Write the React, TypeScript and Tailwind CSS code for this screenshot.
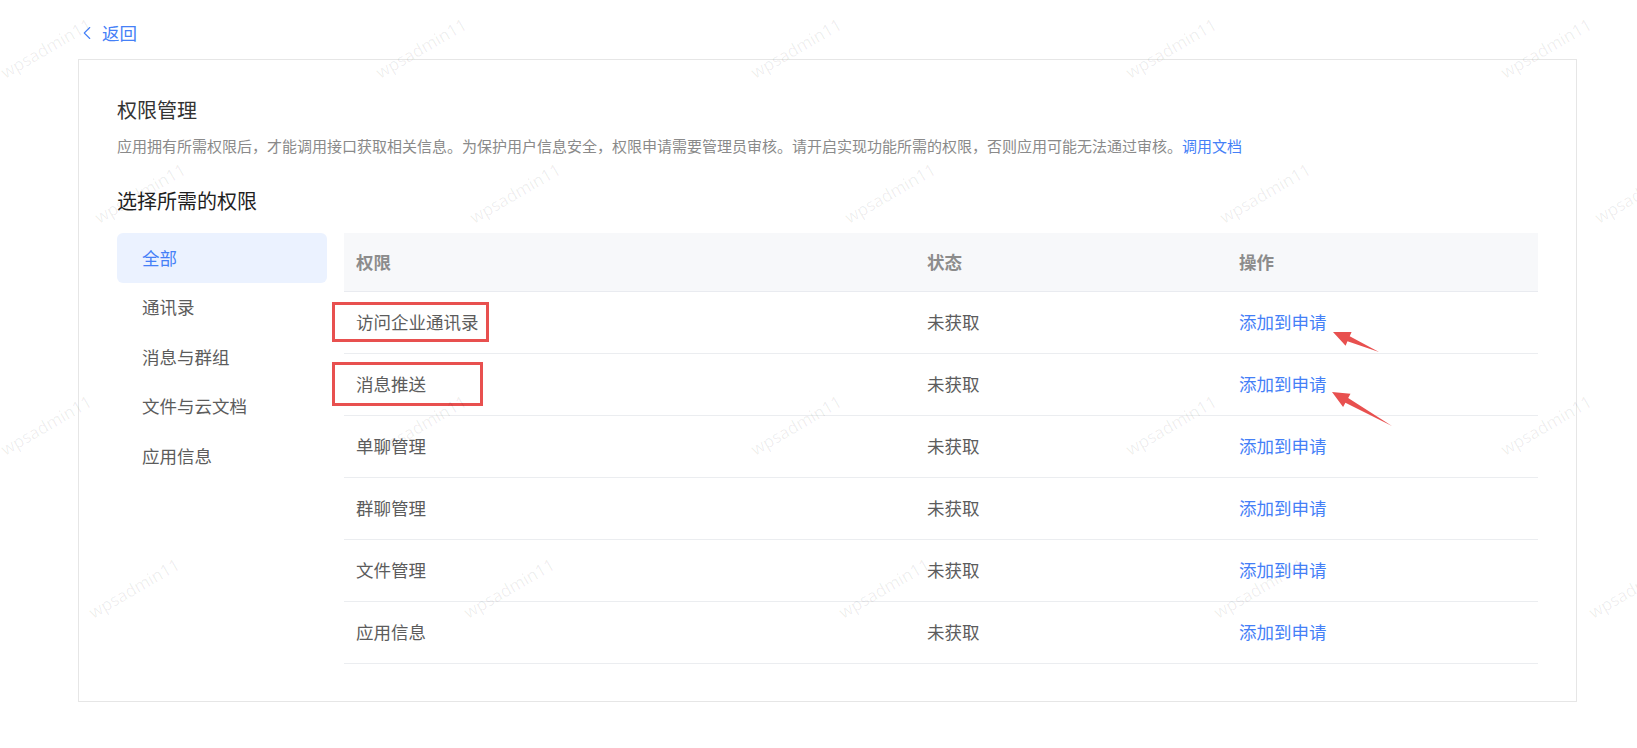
import { ChevronLeft } from "lucide-react";

const categories = ["全部", "通讯录", "消息与群组", "文件与云文档", "应用信息"];

const permissions = [
  "访问企业通讯录",
  "消息推送",
  "单聊管理",
  "群聊管理",
  "文件管理",
  "应用信息",
];

// watermark rows: [center y, first center x]
const watermarkRows: [number, number][] = [
  [48, 46],
  [193, 140],
  [425, 46],
  [588, 134],
];

function arrowPoints(tx: number, ty: number, px: number, py: number) {
  const dx = px - tx;
  const dy = py - ty;
  const len = Math.hypot(dx, dy);
  const ux = dx / len;
  const uy = dy / len;
  const nx = -uy;
  const ny = ux;
  const headLen = 17;
  const headW = 7.5;
  const shaftW = 2.8;
  const bx = px - ux * headLen;
  const by = py - uy * headLen;
  const pts = [
    [tx, ty],
    [bx + nx * shaftW, by + ny * shaftW],
    [bx + nx * headW, by + ny * headW],
    [px, py],
    [bx - nx * headW, by - ny * headW],
    [bx - nx * shaftW, by - ny * shaftW],
  ];
  return pts.map((p) => p.join(",")).join(" ");
}

export default function App() {
  return (
    <div
      className="relative w-full h-[748px] overflow-hidden bg-white"
      style={{ fontFamily: '"Noto Sans CJK SC", "Noto Sans", sans-serif' }}
    >
      {/* back link */}
      <div className="flex items-center h-[26px] mt-[20px] pl-[76px] text-[#4580f7]">
        <ChevronLeft size={22} strokeWidth={1.2} />
        <span className="ml-[4px] text-[17.5px] leading-[26px]">返回</span>
      </div>

      {/* main card */}
      <div className="ml-[78px] mt-[13px] w-[1499px] h-[643px] border border-[#e6e6e6] px-[38px] pt-[36px]">
        <h1 className="text-[20px] leading-[28px] text-[#333333]">权限管理</h1>
        <p className="mt-[11px] text-[15px] leading-[22px] text-[#8a8a8a] whitespace-nowrap">
          应用拥有所需权限后，才能调用接口获取相关信息。为保护用户信息安全，权限申请需要管理员审核。请开启实现功能所需的权限，否则应用可能无法通过审核。
          <span className="text-[#4580f7]">调用文档</span>
        </p>
        <h2 className="mt-[30px] text-[20px] leading-[28px] text-[#1f1f1f]">选择所需的权限</h2>

        <div className="mt-[18px] flex gap-[17px]">
          {/* category list */}
          <div className="w-[210px] shrink-0 flex flex-col">
            {categories.map((c, i) => (
              <div
                key={c}
                className={
                  i === 0
                    ? "h-[49.5px] flex items-center pl-[25px] rounded-[6px] bg-[#ebf2ff] text-[#4580f7] text-[17.5px]"
                    : "h-[49.5px] flex items-center pl-[25px] text-[#5c5c5c] text-[17.5px]"
                }
              >
                {c}
              </div>
            ))}
          </div>

          {/* permission table */}
          <div className="w-[1195px]">
            <div className="grid grid-cols-[571px_312px_1fr] h-[59px] items-center bg-[#f7f8fa] border-b border-[#e9ebf0] text-[17.5px] font-bold text-[#8c8c8c]">
              <div className="pl-[12px]">权限</div>
              <div className="pl-[12px]">状态</div>
              <div className="pl-[12px]">操作</div>
            </div>
            {permissions.map((p) => (
              <div
                key={p}
                className="grid grid-cols-[571px_312px_1fr] h-[62px] items-center border-b border-[#ebedf0] text-[17.5px]"
              >
                <div className="pl-[12px] text-[#5c5c5c]">{p}</div>
                <div className="pl-[12px] text-[#5c5c5c]">未获取</div>
                <div className="pl-[12px] text-[#4580f7]">添加到申请</div>
              </div>
            ))}
          </div>
        </div>
      </div>

      {/* annotation: red boxes */}
      <div className="absolute left-[332px] top-[302px] w-[157px] h-[40px] border-[3px] border-[#e8504f] pointer-events-none" />
      <div className="absolute left-[332px] top-[362px] w-[151px] h-[44px] border-[3px] border-[#e8504f] pointer-events-none" />

      {/* annotation: arrows */}
      <svg className="absolute inset-0 pointer-events-none" width="1637" height="748">
        <polygon points={arrowPoints(1379, 352, 1333, 332)} fill="#e8504f" />
        <polygon points={arrowPoints(1392, 426, 1332, 392)} fill="#e8504f" />
      </svg>

      {/* watermark */}
      <div className="absolute inset-0 pointer-events-none">
        {watermarkRows.map(([y, x0]) =>
          [0, 1, 2, 3, 4].map((k) => (
            <span
              key={`${y}-${k}`}
              className="absolute text-[17px] leading-none text-[#000000]/[0.07] -rotate-30 whitespace-nowrap -translate-x-1/2 -translate-y-1/2"
              style={{ left: x0 + k * 375, top: y, fontFamily: '"Open Sans", sans-serif' }}
            >
              wpsadmin11
            </span>
          ))
        )}
      </div>
    </div>
  );
}
